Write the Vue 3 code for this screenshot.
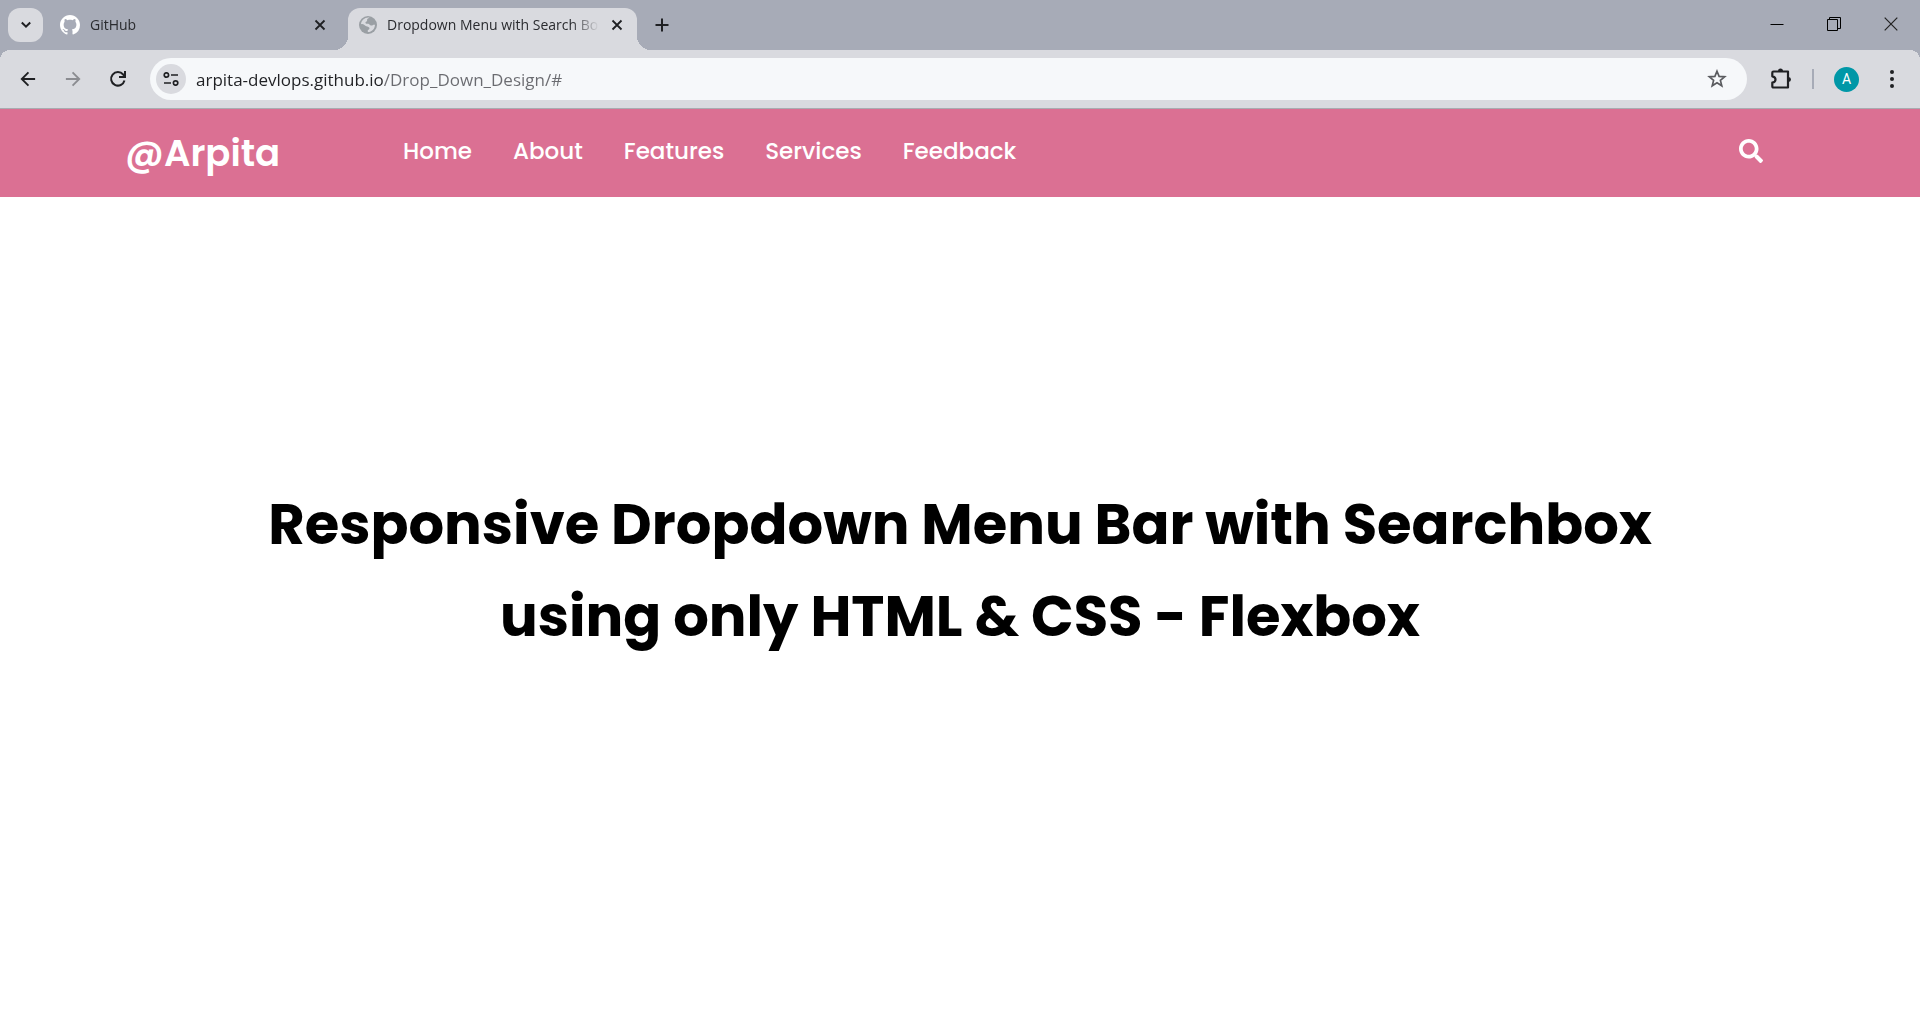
<script setup>
import { ref } from 'vue'

const address = ref('arpita-devlops.github.io/Drop_Down_Design/#')
const links = ['Home', 'About', 'Features', 'Services', 'Feedback']
const headline = ['Responsive Dropdown Menu Bar with Searchbox', 'using only HTML & CSS - Flexbox']
</script>

<template>
  <div class="browser">
    <header class="tab-strip">
      <button class="tab-search" aria-label="Search tabs">
        <svg width="12" height="12" viewBox="0 0 12 12"><path d="M1.800 3.500 6 7.700l4.200-4.200" fill="none" stroke="#1f2023" stroke-width="2" /></svg>
      </button>

      <div class="tab">
        <button class="tab-label">
          <svg width="20" height="20" viewBox="0 0 16 16" fill="#fff"><path d="M8 0C3.580 0 0 3.580 0 8c0 3.540 2.290 6.530 5.470 7.590.4.070.55-.17.55-.38 0-.19-.01-.82-.01-1.490-2.010.37-2.530-.49-2.690-.94-.09-.23-.48-.94-.82-1.130-.28-.15-.68-.52-.01-.53.63-.01 1.080.58 1.230.82.72 1.210 1.870.87 2.330.66.07-.52.28-.87.51-1.070-1.780-.2-3.640-.89-3.640-3.950 0-.87.31-1.590.82-2.150-.08-.2-.36-1.020.08-2.120 0 0 .67-.21 2.200.82.64-.18 1.320-.27 2-.27s1.360.09 2 .27c1.530-1.040 2.200-.82 2.200-.82.44 1.100.16 1.920.08 2.120.51.56.82 1.270.82 2.150 0 3.070-1.870 3.750-3.650 3.950.29.25.54.73.54 1.480 0 1.070-.01 1.930-.01 2.200 0 .21.15.46.55.38A8.010 8.010 0 0 0 16 8c0-4.420-3.580-8-8-8Z" /></svg>
          <span class="tab-title">GitHub</span>
        </button>
        <button class="tab-close" aria-label="Close GitHub tab">
          <svg width="12" height="12" viewBox="0 0 12 12"><path d="m1.500 1.500 9 9m0-9-9 9" stroke="#1f2023" stroke-width="1.800" /></svg>
        </button>
      </div>

      <div class="tab active">
        <button class="tab-label">
          <svg width="18" height="18" viewBox="0 0 18 18"><circle cx="9" cy="9" r="9" fill="#9a9fa4" /><path d="M10.500 1.700c-1.700.4-2.700 1.300-2.400 2.700.3 1.200-1.700 1-1.700 2.300 0 1.100 1.200 1 2.700 1.100 1.600.1 1.500 1.700 3.100 1.700 1.500 0 1.700-1 3.800-.7-.2 4.200-3.300 7.200-7 7.300-.6-.8-.3-2.100.8-2.500 1-.4 1-2.200-.4-2.600-1.500-.4-2.700-.6-4-1.900C4.300 8 3.100 7.900 2 8.300c.4-4 4-7.300 8.500-6.600Z" fill="#d9dadf" /></svg>
          <span class="tab-title">Dropdown Menu with Search Box</span>
        </button>
        <button class="tab-close" aria-label="Close Dropdown Menu tab">
          <svg width="12" height="12" viewBox="0 0 12 12"><path d="m1.500 1.500 9 9m0-9-9 9" stroke="#1f2023" stroke-width="1.800" /></svg>
        </button>
      </div>

      <button class="new-tab" aria-label="New tab">
        <svg width="14" height="14" viewBox="0 0 14 14"><path d="M7 .5v13M.5 7h13" stroke="#1f2023" stroke-width="2" /></svg>
      </button>

      <div class="window-controls">
        <button aria-label="Minimize"><svg width="14" height="14" viewBox="0 0 14 14"><path d="M.5 7.500h13" stroke="#000" /></svg></button>
        <button aria-label="Restore"><svg width="14" height="14" viewBox="0 0 14 14"><path d="M.5 2.500h10v11H.5zM2.500 2.500v-2h11v11h-3" fill="none" stroke="#000" /></svg></button>
        <button aria-label="Close window"><svg width="14" height="14" viewBox="0 0 14 14"><path d="m.7.7 12.600 12.600m0-12.600L.7 13.300" stroke="#222" stroke-width="1.200" /></svg></button>
      </div>
    </header>

    <div class="toolbar">
      <div class="history">
        <button aria-label="Back"><svg width="16" height="16" viewBox="0 0 18 18"><path d="M17 9H2.500M9.500 1.500 2 9l7.500 7.500" fill="none" stroke="#1f2023" stroke-width="2.100" /></svg></button>
        <button aria-label="Forward"><svg width="16" height="16" viewBox="0 0 18 18"><path d="M1 9h14.500M8.500 1.500 16 9l-7.500 7.500" fill="none" stroke="#8b8c91" stroke-width="2.100" /></svg></button>
        <button aria-label="Reload"><svg width="18" height="18" viewBox="0 0 18 18"><path d="M15.500 10.500A6.800 6.800 0 1 1 14.200 4.500L16 6.500" fill="none" stroke="#1f2023" stroke-width="2" /><path d="M16 1v6h-6" fill="none" stroke="#1f2023" stroke-width="2" /></svg></button>
      </div>

      <div class="omnibox">
        <button class="site-info" aria-label="View site information">
          <svg width="16" height="14" viewBox="0 0 16 14" fill="none" stroke="#1f2023" stroke-width="1.700"><circle cx="3.400" cy="3" r="2.200" /><path d="M8 3h7M1 11h7" /><circle cx="12.600" cy="11" r="2.200" /></svg>
        </button>
        <input v-model="address" class="address" type="text" aria-label="Address" spellcheck="false" />
        <button class="star" aria-label="Bookmark this page">
          <svg width="20" height="20" viewBox="0 0 20 20"><path d="m10 2.200 2.100 5.200 5.600.4-4.300 3.600 1.400 5.400-4.800-3-4.800 3 1.400-5.400-4.300-3.600 5.600-.4Z" fill="none" stroke="#5a5b5f" stroke-width="1.700" /></svg>
        </button>
      </div>

      <div class="actions">
        <button class="extensions" aria-label="Extensions">
          <svg width="22" height="22" viewBox="0 0 22 22"><path d="M3.500 3.500h14.500v16H3.500q-1.200 0-1.200-1.200v-3.600c2.300-.4 3.200-1.700 3.200-3.200s-.9-2.800-3.200-3.200V4.700q0-1.200 1.200-1.200Z" fill="none" stroke="#1f2023" stroke-width="2.200" stroke-linejoin="round" /><path d="M8 3a2.500 2.500 0 0 1 5 0ZM18.500 9a2.500 2.500 0 0 1 0 5Z" fill="#1f2023" /></svg>
        </button>
        <span class="divider"></span>
        <button class="avatar" aria-label="Profile">A</button>
        <button class="more" aria-label="More options">
          <svg width="4" height="18" viewBox="0 0 4 18" fill="#1f2023"><circle cx="2" cy="2" r="2" /><circle cx="2" cy="9" r="2" /><circle cx="2" cy="16" r="2" /></svg>
        </button>
      </div>
    </div>

    <nav class="site-nav">
      <a class="logo" href="#">@Arpita</a>
      <ul class="links">
        <li v-for="link in links" :key="link"><a href="#">{{ link }}</a></li>
      </ul>
      <button class="search" aria-label="Search">
        <svg width="24" height="24" viewBox="0 0 512 512" fill="#fff"><path d="M505 442.700 405.300 343c-4.500-4.500-10.600-7-17-7H372c27.600-35.300 44-79.700 44-128C416 93.100 322.900 0 208 0S0 93.100 0 208s93.100 208 208 208c48.300 0 92.700-16.400 128-44v16.300c0 6.400 2.500 12.500 7 17l99.700 99.700c9.400 9.400 24.600 9.400 33.900 0l28.300-28.300c9.400-9.400 9.400-24.600.1-34zM208 336c-70.700 0-128-57.200-128-128 0-70.700 57.200-128 128-128 70.700 0 128 57.200 128 128 0 70.700-57.200 128-128 128z" /></svg>
      </button>
    </nav>

    <main class="hero">
      <h1><span v-for="line in headline" :key="line">{{ line }}</span></h1>
    </main>
  </div>
</template>

<style>
body {
  background: #fff;
}
</style>

<style scoped>
.browser {
  min-height: 100vh;
  display: flex;
  flex-direction: column;
  font-family: "Segoe UI", "Open Sans", "Noto Sans", sans-serif;
}

button {
  display: flex;
  align-items: center;
  justify-content: center;
  padding: 0;
  border: 0;
  background: none;
  font: inherit;
  color: inherit;
}

svg {
  flex: none;
}

.tab-strip {
  display: flex;
  height: 50px;
  padding: 0 1px 0 8px;
  background: #a7abb7;
}

.tab-search {
  width: 35px;
  height: 34px;
  margin-top: 8px;
  border-radius: 12px;
  background: #d9dadf;
}

.tab {
  position: relative;
  display: flex;
  align-items: center;
  width: 305px;
  height: 42px;
  margin-top: 8px;
  padding: 0 22px 8px 17px;
  box-sizing: border-box;
  border-radius: 12px 12px 0 0;
}

.tab.active {
  width: 289px;
  padding: 0 14px 8px 11px;
  background: #d9dadf;
}

.tab.active::before,
.tab.active::after {
  content: "";
  position: absolute;
  bottom: 0;
  width: 14px;
  height: 14px;
}

.tab.active::before {
  right: 100%;
  background: radial-gradient(circle at 0 0, transparent 14px, #d9dadf 14px);
}

.tab.active::after {
  left: 100%;
  background: radial-gradient(circle at 100% 0, transparent 14px, #d9dadf 14px);
}

.tab-label {
  flex: 1;
  justify-content: flex-start;
  gap: 10px;
  min-width: 0;
  height: 34px;
}

.tab-title {
  flex: 1;
  overflow: hidden;
  margin-right: 12px;
  font-size: 14px;
  line-height: 20px;
  text-align: left;
  white-space: nowrap;
  color: #2a2b2f;
  mask-image: linear-gradient(to left, transparent, #000 28px);
}

.tab-close {
  width: 12px;
  height: 34px;
}

.new-tab {
  width: 36px;
  height: 34px;
  margin: 8px 0 0 7px;
}

.window-controls {
  display: flex;
  margin-left: auto;
}

.window-controls button {
  width: 57px;
  height: 48px;
}

.toolbar {
  display: flex;
  align-items: center;
  height: 59px;
  box-sizing: border-box;
  border-bottom: 1px solid #a9abb0;
  background: radial-gradient(circle at 10px 10px, #d9dadf 10px, #a7abb7 10px) left top / 10px 10px no-repeat,
    radial-gradient(circle at 0 10px, #d9dadf 10px, #a7abb7 10px) right top / 10px 10px no-repeat, #d9dadf;
}

.history {
  display: flex;
  padding: 0 10px 0 5px;
}

.history button {
  width: 45px;
  height: 40px;
}

.omnibox {
  flex: 1;
  display: flex;
  align-items: center;
  height: 42px;
  padding: 0 20px 0 6px;
  border-radius: 21px;
  background: #f6f8fa;
}

.site-info {
  width: 30px;
  height: 30px;
  border-radius: 50%;
  background: #d9dadf;
}

.address {
  flex: 1;
  min-width: 0;
  height: 30px;
  margin-left: 10px;
  padding: 0;
  border: 0;
  outline: 0;
  font: 17px/24px "Segoe UI", "Open Sans", "Noto Sans", sans-serif;
  color: transparent;
  background: linear-gradient(90deg, #202124 187px, #6a6b70 187px);
  background-clip: text;
}

.actions {
  display: flex;
  align-items: center;
  padding: 0 10px 0 23px;
}

.divider {
  width: 2px;
  height: 20px;
  margin: 0 20px;
  background: #a7abb7;
}

.avatar {
  width: 25px;
  height: 25px;
  border-radius: 50%;
  background: #0097a7;
  color: #fff;
  font: 14px/20px Roboto, sans-serif;
}

.more {
  width: 36px;
  height: 36px;
  margin-left: 15px;
}

.site-nav {
  display: flex;
  align-items: center;
  height: 88px;
  padding: 0 153px 0 125px;
  background: #db7093;
  color: #fff;
  font-family: Poppins, Inter, sans-serif;
}

.site-nav a {
  color: inherit;
  text-decoration: none;
}

.logo {
  width: 278px;
  font-size: 37px;
  line-height: 48px;
  font-weight: 600;
}

.links {
  display: flex;
  gap: 41px;
  margin: 0;
  padding: 0 0 4px;
  list-style: none;
  font-size: 23px;
  line-height: 32px;
  font-weight: 500;
}

.search {
  width: 32px;
  height: 32px;
  margin-left: auto;
  padding-bottom: 4px;
}

.hero {
  flex: 1;
  display: flex;
  justify-content: center;
  align-items: flex-start;
  padding-top: 282px;
}

h1 {
  margin: 0;
  font: 700 56px/92px Poppins, Inter, sans-serif;
  text-align: center;
  color: #000;
}

h1 span {
  display: block;
}
</style>
